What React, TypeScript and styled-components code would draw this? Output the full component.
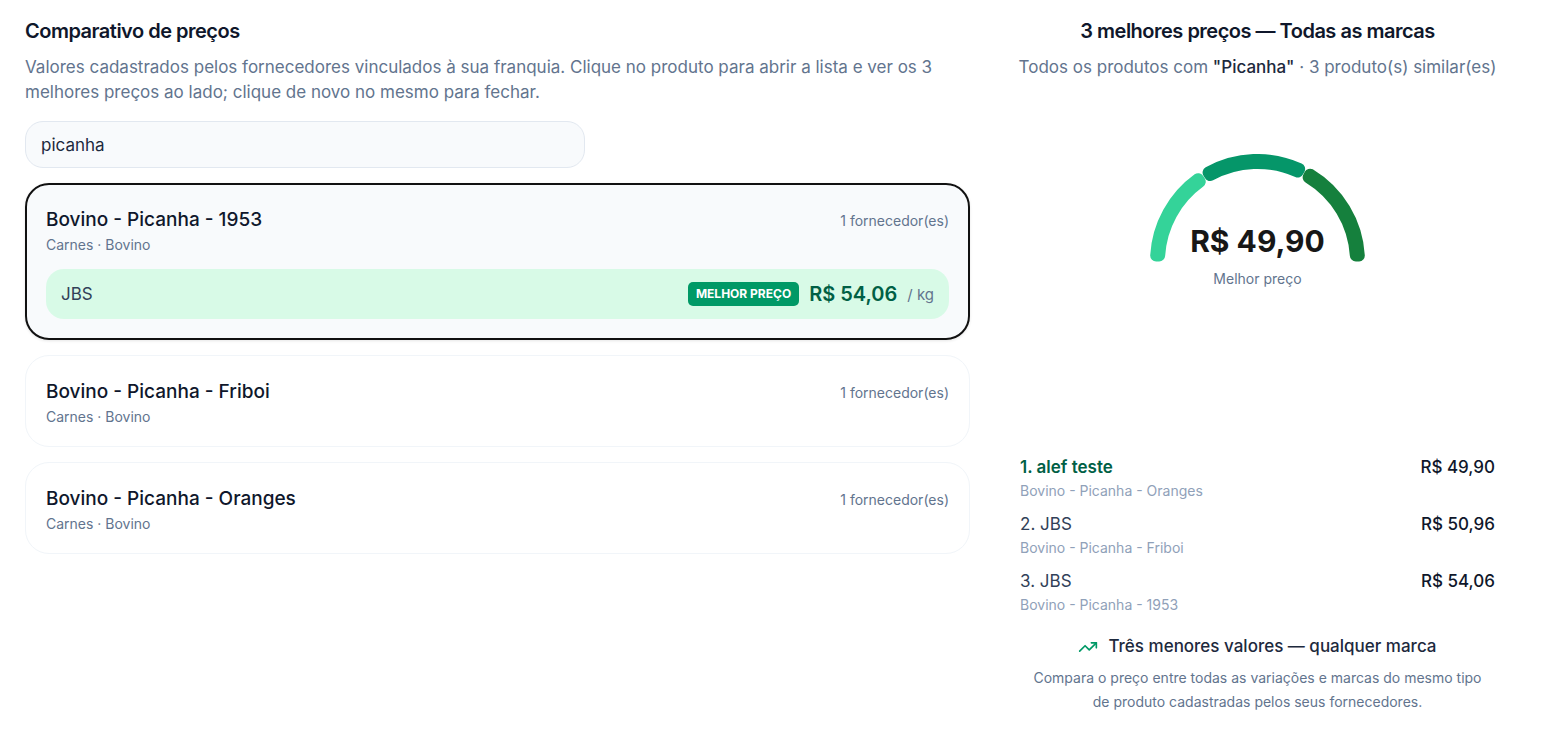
import React, { useState } from "react";
import styled, { createGlobalStyle } from "styled-components";
import { TrendingUp } from "lucide-react";

const GlobalStyle = createGlobalStyle`
  *, *::before, *::after { box-sizing: border-box; }
  body {
    margin: 0;
    background: #fff;
    color: #0f172b;
    font-family: Inter, "Liberation Sans", sans-serif;
  }
  h2, h3, p, ol { margin: 0; padding: 0; }
  ol { list-style: none; }
  button, input { font: inherit; color: inherit; }
`;

const Page = styled.main`
  display: grid;
  grid-template-columns: minmax(0, 9fr) minmax(0, 5fr);
  gap: 25px;
  padding: 16px 47px 24px 25px;
`;

const Column = styled.section`
  display: flex;
  flex-direction: column;
`;

const Heading = styled.h2`
  font-size: 20px;
  line-height: 30px;
  font-weight: 600;
  letter-spacing: -0.025em;
`;

const Description = styled.p`
  margin-top: 9px;
  font-size: 17px;
  line-height: 25px;
  color: #62748e;
`;

const SearchInput = styled.input`
  width: 100%;
  max-width: 560px;
  height: 47px;
  margin: 16px 0 15px;
  padding: 0 15px;
  border: 1px solid #e2e8f0;
  border-radius: 18px;
  background: #f8fafc;
  font-size: 17px;
  color: #1d293d;
  outline: none;
`;

const ProductList = styled.div`
  display: flex;
  flex-direction: column;
  gap: 15px;
`;

const ProductCard = styled.article<{ $open: boolean }>`
  padding: ${(p) => (p.$open ? 19 : 20)}px;
  border: ${(p) => (p.$open ? "2px solid #111" : "1px solid #f1f5f9")};
  border-radius: 24px;
  background: ${(p) => (p.$open ? "#f8fafc" : "#fff")};
  box-shadow: ${(p) => (p.$open ? "0 1px 3px rgba(0, 0, 0, 0.1)" : "none")};
`;

const ProductToggle = styled.button`
  display: flex;
  justify-content: space-between;
  align-items: flex-start;
  width: 100%;
  padding: 0;
  border: 0;
  background: none;
  text-align: left;
  cursor: pointer;
`;

const ProductName = styled.span`
  display: block;
  font-size: 19px;
  line-height: 31px;
  font-weight: 500;
`;

const Category = styled.span`
  display: block;
  font-size: 14px;
  line-height: 19px;
  color: #62748e;
`;

const SupplierCount = styled.span`
  font-size: 14px;
  line-height: 34px;
  color: #62748e;
`;

const Offer = styled.div`
  display: flex;
  align-items: center;
  justify-content: space-between;
  height: 50px;
  margin-top: 15px;
  padding: 0 15px;
  border-radius: 18px;
  background: #d8fae7;
  font-size: 17px;
  color: #314158;
`;

const OfferPrice = styled.span`
  display: flex;
  align-items: center;
  gap: 10px;
`;

const BestTag = styled.span`
  padding: 0 8px;
  border-radius: 5px;
  background: #009966;
  color: #fff;
  font-size: 12px;
  line-height: 24px;
  font-weight: 700;
`;

const Amount = styled.strong`
  font-size: 20px;
  font-weight: 600;
  color: #006045;
`;

const Unit = styled.span`
  font-size: 15px;
  color: #62748e;
`;

const Summary = styled(Column)`
  align-items: center;
  text-align: center;
`;

const Term = styled.strong`
  font-weight: 500;
  color: #1d293d;
`;

const Gauge = styled.div`
  display: grid;
  justify-items: center;
  width: 215px;
  height: 375px;
  padding-top: 74px;
`;

const GaugeArc = styled.svg`
  grid-area: 1 / 1;
  display: block;
`;

const GaugeLabel = styled.div`
  grid-area: 1 / 1;
  padding-top: 67px;
`;

const GaugeValue = styled.div`
  font-size: 30px;
  line-height: 40px;
  font-weight: 700;
  color: #171717;
  white-space: nowrap;
`;

const GaugeCaption = styled.div`
  margin-top: 6px;
  font-size: 14px;
  line-height: 24px;
  color: #62748e;
`;

const Ranking = styled.ol`
  display: flex;
  flex-direction: column;
  gap: 10px;
  width: 100%;
  padding: 0 25px;
  text-align: left;
`;

const RankRow = styled.div<{ $best: boolean }>`
  display: flex;
  justify-content: space-between;
  font-size: 17px;
  line-height: 25px;
  font-weight: ${(p) => (p.$best ? 600 : 400)};
  color: ${(p) => (p.$best ? "#006045" : "#314158")};
`;

const RankPrice = styled.span`
  font-weight: 500;
  color: #0f172b;
`;

const RankProduct = styled.div`
  font-size: 14px;
  line-height: 22px;
  color: #90a1b9;
`;

const Insight = styled.h3`
  display: flex;
  align-items: center;
  gap: 10px;
  margin-top: 18px;
  font-size: 17px;
  line-height: 25px;
  font-weight: 500;
  color: #1d293d;
  svg { color: #009966; }
`;

const Note = styled.p`
  max-width: 465px;
  margin-top: 7px;
  font-size: 14px;
  line-height: 24px;
  color: #62748e;
`;

const products = [
  { name: "Bovino - Picanha - 1953", price: "R$ 54,06" },
  { name: "Bovino - Picanha - Friboi", price: "R$ 50,96" },
  { name: "Bovino - Picanha - Oranges", price: "R$ 49,90" },
];

const ranking = [
  { supplier: "alef teste", product: "Bovino - Picanha - Oranges", price: "R$ 49,90" },
  { supplier: "JBS", product: "Bovino - Picanha - Friboi", price: "R$ 50,96" },
  { supplier: "JBS", product: "Bovino - Picanha - 1953", price: "R$ 54,06" },
];

const segments = [
  { from: 180, to: 122.4, color: "#34d399" },
  { from: 122.2, to: 62.4, color: "#059669" },
  { from: 62.2, to: 0, color: "#15803d" },
];

/* Ring sector inset by the corner radius; a round-joined stroke restores the full size. */
function sectorPath(from: number, to: number) {
  const round = 6;
  const outer = 107.5 - round;
  const inner = 92.5 + round;
  const point = (r: number, deg: number, side: number) => {
    const a = (deg * Math.PI) / 180 + (side * round) / r;
    return `${107.5 + r * Math.cos(a)} ${107.5 - r * Math.sin(a)}`;
  };
  return `M${point(outer, from, -1)} A${outer} ${outer} 0 0 1 ${point(outer, to, 1)}
    L${point(inner, to, 1)} A${inner} ${inner} 0 0 0 ${point(inner, from, -1)} Z`;
}

export default function App() {
  const [query, setQuery] = useState("picanha");
  const [open, setOpen] = useState<number | null>(0);

  return (
    <>
      <GlobalStyle />
      <Page>
        <Column>
          <Heading>Comparativo de preços</Heading>
          <Description>
            Valores cadastrados pelos fornecedores vinculados à sua franquia. Clique no produto para
            abrir a lista e ver os 3 melhores preços ao lado; clique de novo no mesmo para fechar.
          </Description>
          <SearchInput
            type="text"
            aria-label="Buscar produto"
            value={query}
            onChange={(e) => setQuery(e.target.value)}
          />
          <ProductList>
            {products.map((product, i) => (
              <ProductCard key={product.name} $open={open === i}>
                <ProductToggle
                  type="button"
                  aria-expanded={open === i}
                  onClick={() => setOpen(open === i ? null : i)}
                >
                  <span>
                    <ProductName>{product.name}</ProductName>
                    <Category>Carnes · Bovino</Category>
                  </span>
                  <SupplierCount>1 fornecedor(es)</SupplierCount>
                </ProductToggle>
                {open === i && (
                  <Offer>
                    <span>JBS</span>
                    <OfferPrice>
                      <BestTag>MELHOR PREÇO</BestTag>
                      <Amount>{product.price}</Amount>
                      <Unit>/ kg</Unit>
                    </OfferPrice>
                  </Offer>
                )}
              </ProductCard>
            ))}
          </ProductList>
        </Column>

        <Summary>
          <Heading>3 melhores preços — Todas as marcas</Heading>
          <Description>
            Todos os produtos com <Term>"Picanha"</Term> · 3 produto(s) similar(es)
          </Description>
          <Gauge>
            <GaugeArc width="215" height="108" viewBox="0 0 215 108" aria-hidden="true">
              {segments.map((s) => (
                <path
                  key={s.color}
                  d={sectorPath(s.from, s.to)}
                  fill={s.color}
                  stroke={s.color}
                  strokeWidth="12"
                  strokeLinejoin="round"
                />
              ))}
            </GaugeArc>
            <GaugeLabel>
              <GaugeValue>R$ 49,90</GaugeValue>
              <GaugeCaption>Melhor preço</GaugeCaption>
            </GaugeLabel>
          </Gauge>
          <Ranking>
            {ranking.map((item, i) => (
              <li key={item.product}>
                <RankRow $best={i === 0}>
                  <span>
                    {i + 1}. {item.supplier}
                  </span>
                  <RankPrice>{item.price}</RankPrice>
                </RankRow>
                <RankProduct>{item.product}</RankProduct>
              </li>
            ))}
          </Ranking>
          <Insight>
            <TrendingUp size={20} aria-hidden="true" />
            Três menores valores — qualquer marca
          </Insight>
          <Note>
            Compara o preço entre todas as variações e marcas do mesmo tipo de produto cadastradas
            pelos seus fornecedores.
          </Note>
        </Summary>
      </Page>
    </>
  );
}
